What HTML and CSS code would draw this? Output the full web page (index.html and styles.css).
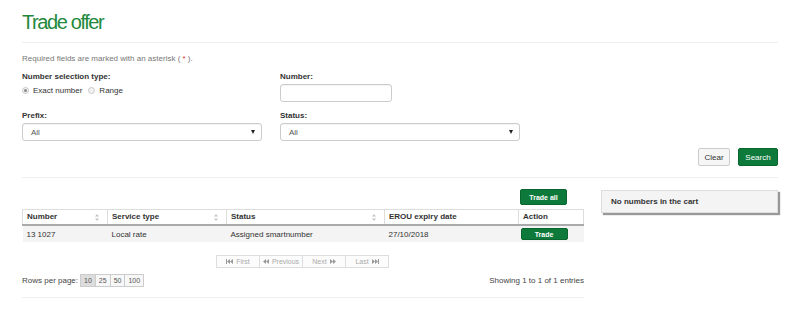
FILE: index.html
```html
<!DOCTYPE html>
<html lang="en">
<head>
  <meta charset="UTF-8"/>
  <title>Trade offer</title>
  <link rel="stylesheet" href="styles.css">
</head>
<body>
  <div class="page">
    <h1 class="title">Trade offer</h1>
    <hr class="rule">
    <p class="note">Required fields are marked with an asterisk ( <span class="req">*</span> ).</p>

    <div class="form-grid">
      <div class="field">
        <label>Number selection type:</label>
        <div class="radios">
          <span class="radio checked"></span><span>Exact number</span>
          <span class="radio"></span><span>Range</span>
        </div>
      </div>
      <div class="field">
        <label>Number:</label>
        <div class="input short"></div>
      </div>
      <div class="field">
        <label>Prefix:</label>
        <div class="input select"><span>All</span><span class="caret"></span></div>
      </div>
      <div class="field">
        <label>Status:</label>
        <div class="input select"><span>All</span><span class="caret"></span></div>
      </div>
    </div>

    <div class="actions">
      <button class="btn btn-default">Clear</button>
      <button class="btn btn-green">Search</button>
    </div>
    <hr class="rule">

    <div class="results">
      <div class="main">
        <div class="toolbar"><button class="btn btn-green btn-sm">Trade all</button></div>
        <table class="grid">
          <thead>
            <tr>
              <th class="c1">Number<svg class="sort" width="4" height="7" viewBox="0 0 4 7"><path d="M2 0L4 2.5H0zM2 7L4 4.5H0z"/></svg></th>
              <th class="c2">Service type<svg class="sort" width="4" height="7" viewBox="0 0 4 7"><path d="M2 0L4 2.5H0zM2 7L4 4.5H0z"/></svg></th>
              <th class="c3">Status<svg class="sort" width="4" height="7" viewBox="0 0 4 7"><path d="M2 0L4 2.5H0zM2 7L4 4.5H0z"/></svg></th>
              <th class="c4">EROU expiry date</th>
              <th class="c5">Action</th>
            </tr>
          </thead>
          <tbody>
            <tr>
              <td>13 1027</td>
              <td>Local rate</td>
              <td>Assigned smartnumber</td>
              <td>27/10/2018</td>
              <td><button class="btn btn-green btn-xs">Trade</button></td>
            </tr>
          </tbody>
        </table>

        <div class="pager">
          <span class="pg"><svg width="7" height="5" viewBox="0 0 7 5"><path d="M0 0h1v5H0zM1 2.5L4 0v5zM4 2.5L7 0v5z"/></svg>First</span>
          <span class="pg"><svg width="6" height="5" viewBox="0 0 6 5"><path d="M0 2.5L3 0v5zM3 2.5L6 0v5z"/></svg>Previous</span>
          <span class="pg">Next<svg width="6" height="5" viewBox="0 0 6 5"><path d="M6 2.5L3 0v5zM3 2.5L0 0v5z"/></svg></span>
          <span class="pg">Last<svg width="7" height="5" viewBox="0 0 7 5"><path d="M6 0h1v5H6zM6 2.5L3 0v5zM3 2.5L0 0v5z"/></svg></span>
        </div>

        <div class="footer">
          <div class="rows">Rows per page:
            <span class="sizes"><span class="size active">10</span><span class="size">25</span><span class="size">50</span><span class="size">100</span></span>
          </div>
          <div class="info">Showing 1 to 1 of 1 entries</div>
        </div>
        <hr class="rule bottom">
      </div>

      <aside class="cart">No numbers in the cart</aside>
    </div>
  </div>
</body>
</html>
```

FILE: styles.css
```css
body { margin:0; background:#fff; font-family:"Liberation Sans", Arial, sans-serif; font-size:8px; color:#333; }
.page { padding:10px 22px 0; }
.title { margin:0; font-size:20px; line-height:24px; font-weight:normal; color:#22893c; letter-spacing:-1.4px; }
.rule { border:0; border-top:1px solid #eee; margin:8px 0 0; }
.note { margin:10px 0 0; line-height:11px; color:#777; }
.req { color:#d9302c; }

.form-grid { display:grid; grid-template-columns:240px 240px; column-gap:18px; row-gap:8px; margin-top:7px; }
.field label { display:block; font-weight:bold; line-height:11px; margin-bottom:2px; color:#333; }
.radios { display:flex; align-items:center; height:12px; line-height:11px; color:#333; }
.radio { width:5px; height:5px; border:1px solid #c8c8c8; border-radius:50%; background:#f2f2f2; margin-right:4px; position:relative; }
.radio + span { margin-right:6px; }
.radio.checked::after { content:""; position:absolute; left:1px; top:1px; width:3px; height:3px; border-radius:50%; background:#888; }
.input { height:16px; border:1px solid #ccc; border-radius:3px; background:#fff; box-shadow:inset 0 1px 1px rgba(0,0,0,0.05); }
.input.short { width:110px; }
.select { display:flex; align-items:center; justify-content:space-between; padding:0 6px 0 8px; color:#555; }
.caret { width:0; height:0; border-left:2.5px solid transparent; border-right:2.5px solid transparent; border-top:4px solid #222; }

.actions { display:flex; justify-content:flex-end; gap:8px; margin-top:7px; }
.btn { font-family:inherit; font-size:8px; border-radius:2px; cursor:pointer; padding:0; }
.btn-default { width:32px; height:18px; background:#f6f6f6; border:1px solid #ccc; color:#333; }
.btn-green { width:40px; height:18px; background:#0d7a3c; border:1px solid #09662f; color:#fff; }
.btn-sm { width:47px; height:16px; font-size:7px; font-weight:bold; }
.btn-xs { width:47px; height:12px; font-size:7px; font-weight:bold; display:block; }
.actions + .rule { margin-top:11px; }

.results { display:flex; gap:17px; margin-top:11px; }
.main { width:562px; }
.toolbar { display:flex; justify-content:flex-end; padding-right:17px; }
.grid { width:100%; border-collapse:collapse; margin-top:4px; table-layout:fixed; }
.grid th { position:relative; text-align:left; font-weight:bold; height:14px; padding:0 4px; border:1px solid #ddd; border-bottom:2px solid #aaa; line-height:14px; }
.grid .c1 { width:76px; } .grid .c2 { width:110px; } .grid .c3 { width:149px; } .grid .c4 { width:125px; }
.sort { position:absolute; right:8px; top:4px; fill:#c4c4c4; }
.grid td { height:16px; padding:0 4px; background:#f4f4f4; color:#333; }
.grid td:last-child { padding:0 2px; }

.pager { display:flex; justify-content:center; margin-top:13px; }
.pg { width:42px; height:11px; border:1px solid #ddd; margin-left:-1px; background:#fcfcfc; color:#aaa; font-size:7px; display:flex; align-items:center; justify-content:center; gap:3px; }
.pg svg { fill:#999; }

.footer { display:flex; justify-content:space-between; align-items:center; margin-top:6px; color:#444; }
.rows { display:flex; align-items:center; gap:3px; }
.sizes { display:flex; }
.size { height:11px; line-height:11px; padding:0 3px; border:1px solid #ccc; margin-left:-1px; background:#f7f7f7; color:#555; font-size:7px; }
.size.active { background:#ddd; }
.info { color:#444; }
.rule.bottom { margin-top:10px; }

.cart { width:177px; height:23px; box-sizing:border-box; margin-top:1px; padding:0 9px; display:flex; align-items:center; font-weight:bold; background:#f4f4f4; border:1px solid #ddd; box-shadow:2px 2px 1px #999; color:#333; }
```
